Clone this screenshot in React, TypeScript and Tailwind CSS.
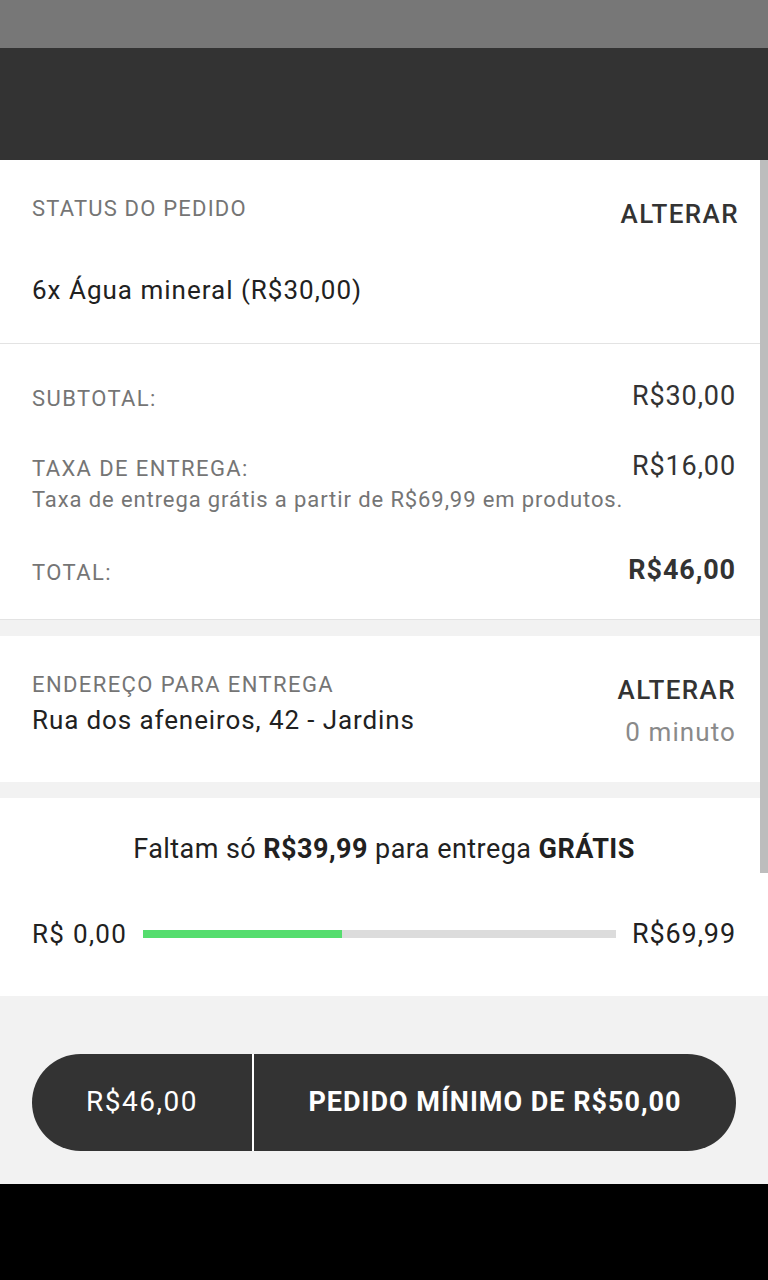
import React from "react";

const Row: React.FC<{ label: string; value: string; bold?: boolean; note?: string; className?: string }> = ({
  label,
  value,
  bold,
  note,
  className = "",
}) => (
  <div className={`flex items-start justify-between ${className}`}>
    <div>
      <div className="pt-[6px] text-[22px] leading-[26px] tracking-[1.4px] text-[#757575]">{label}</div>
      {note && <div className="mt-[5px] text-[22px] leading-[26px] tracking-[0.9px] text-[#757575]">{note}</div>}
    </div>
    <div className={`text-[27px] leading-[32px] tracking-[0.9px] text-[#333333] ${bold ? "font-bold tracking-[0.6px]" : ""}`}>
      {value}
    </div>
  </div>
);

export default function App() {
  // bar fill as drawn in the app (not strictly 30/69.99)
  const progress = 0.42;

  return (
    <div className="relative flex h-[1280px] w-[768px] flex-col overflow-hidden bg-[#f2f2f2] font-['Roboto',sans-serif]">
      {/* status bar + header */}
      <div className="h-[48px] bg-[#777777]" />
      <div className="h-[112px] bg-[#333333]" />

      {/* order status */}
      <div className="h-[184px] border-b border-[#e3e3e3] bg-white px-[32px]">
        <div className="flex items-start justify-between pt-[36px]">
          <div className="text-[22px] leading-[26px] tracking-[1.2px] text-[#757575]">STATUS DO PEDIDO</div>
          <div className="-mr-[3px] mt-[2px] text-[26px] font-medium leading-[32px] tracking-[1.4px] text-[#333333]">ALTERAR</div>
        </div>
        <div className="mt-[44px] text-[26px] leading-[32px] tracking-[1px] text-[#212121]">6x Água mineral (R$30,00)</div>
      </div>

      {/* totals */}
      <div className="h-[276px] border-b border-[#e3e3e3] bg-white px-[32px] pt-[36px]">
        <Row label="SUBTOTAL:" value="R$30,00" />
        <Row
          className="mt-[38px]"
          label="TAXA DE ENTREGA:"
          value="R$16,00"
          note="Taxa de entrega grátis a partir de R$69,99 em produtos."
        />
        <Row className="mt-[41px]" label="TOTAL:" value="R$46,00" bold />
      </div>

      {/* address */}
      <div className="mt-[16px] flex h-[146px] items-start justify-between bg-white px-[32px] pt-[36px]">
        <div>
          <div className="text-[22px] leading-[26px] tracking-[1.4px] text-[#757575]">ENDEREÇO PARA ENTREGA</div>
          <div className="mt-[6px] text-[26px] leading-[32px] tracking-[0.9px] text-[#212121]">Rua dos afeneiros, 42 - Jardins</div>
        </div>
        <div className="flex flex-col items-end">
          <div className="mt-[2px] text-[26px] font-medium leading-[32px] tracking-[1.4px] text-[#333333]">ALTERAR</div>
          <div className="mt-[10px] text-[26px] leading-[32px] tracking-[1.1px] text-[#8a8a8a]">0 minuto</div>
        </div>
      </div>

      {/* free delivery progress */}
      <div className="mt-[16px] h-[198px] bg-white px-[32px] pt-[34px]">
        <div className="text-center text-[27px] leading-[34px] tracking-[0.45px] text-[#212121]">
          Faltam só <span className="font-bold">R$39,99</span> para entrega <span className="font-bold">GRÁTIS</span>
        </div>
        <div className="mt-[52px] flex items-center gap-[16px]">
          <div className="text-[26px] leading-[32px] tracking-[1.3px] text-[#212121]">R$ 0,00</div>
          <div className="h-[8px] flex-1 bg-[#dcdcdc]">
            <div className="h-full bg-[#55dd6e]" style={{ width: `${progress * 100}%` }} />
          </div>
          <div className="text-[27px] leading-[32px] tracking-[0.9px] text-[#212121]">R$69,99</div>
        </div>
      </div>

      {/* checkout button */}
      <div className="flex h-[188px] items-center px-[32px] pt-[24px]">
        <div className="flex h-[97px] w-full overflow-hidden rounded-full bg-[#333333] text-white">
          <div className="flex w-[220px] items-center justify-center text-[28px] tracking-[1.5px]">R$46,00</div>
          <div className="w-[2px] bg-white" />
          <div className="flex flex-1 items-center justify-center text-[27px] font-bold tracking-[1px]">
            PEDIDO MÍNIMO DE R$50,00
          </div>
        </div>
      </div>

      {/* nav bar */}
      <div className="flex-1 bg-black" />

      {/* scrollbar */}
      <div className="absolute right-0 top-[160px] h-[713px] w-[8px] bg-[#bdbdbd]" />
    </div>
  );
}
